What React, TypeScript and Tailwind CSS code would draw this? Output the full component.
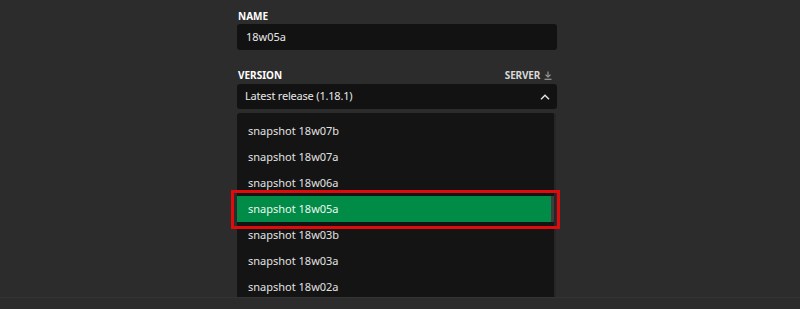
import React from 'react';

const versions = [
  'snapshot 18w07b',
  'snapshot 18w07a',
  'snapshot 18w06a',
  'snapshot 18w05a',
  'snapshot 18w03b',
  'snapshot 18w03a',
  'snapshot 18w02a',
];

const selected = 'snapshot 18w05a';

const ChevronUp = () => (
  <svg width="10" height="6" viewBox="0 0 10 6" fill="none" stroke="#e5e5e5" strokeWidth="1.4">
    <path d="M1 5.2 L5 1.2 L9 5.2" />
  </svg>
);

const DownloadIcon = () => (
  <svg width="8" height="9" viewBox="0 0 8 9" fill="none" stroke="#9a9a9a" strokeWidth="1.2">
    <path d="M4 0.5 V5.8" />
    <path d="M1.5 3.6 L4 6 L6.5 3.6" />
    <path d="M0.5 8.3 H7.5" />
  </svg>
);

const App: React.FC = () => {
  return (
    <div
      className="h-[309px] w-[800px] overflow-hidden bg-[#2c2c2c] text-white"
      style={{ fontFamily: '"Noto Sans", "Open Sans", sans-serif' }}
    >
      <div className="ml-[237px] w-[320px] pt-[10px]">
        {/* Name */}
        <div className="text-[10px] font-bold leading-[12px] text-white pl-[1px] mb-[2px]">NAME</div>
        <div className="h-[26px] rounded-[3px] bg-[#121212] px-[9px] flex items-center text-[11px] text-[#e8e8e8]">
          18w05a
        </div>

        {/* Version */}
        <div className="mt-[19px] mb-[3px] flex items-center justify-between text-[10px] font-bold leading-[12px] pl-[1px] pr-[5px]">
          <span>VERSION</span>
          <span className="flex items-center gap-[4px] text-[#d8d8d8] tracking-[-0.2px]">
            SERVER
            <DownloadIcon />
          </span>
        </div>
        <div className="h-[25px] rounded-[3px] bg-[#121212] pl-[8px] pr-[7px] flex items-center justify-between text-[11px] tracking-[-0.2px] text-[#e8e8e8]">
          <span>Latest release (1.18.1)</span>
          <ChevronUp />
        </div>

        {/* Dropdown */}
        <div className="relative mt-[4px] h-[184px] w-[319px] rounded-t-[3px] bg-[#141414] pt-[5px] border-r-2 border-[#262626]">
          {versions.map((v) => {
            const isSel = v === selected;
            return (
              <div key={v} className="relative flex h-[26px] items-center">
                <div
                  className={`flex h-full w-[315px] items-center pl-[11px] text-[11px] ${
                    isSel ? 'bg-[#008b46] text-[#eef7f1]' : 'text-[#e2e2e2]'
                  }`}
                >
                  {v}
                </div>
                {isSel && (
                  <>
                    <div className="h-full w-[3px] bg-[#3d3d3d]" />
                    <div className="pointer-events-none absolute left-[-6px] top-[-6px] h-[39px] w-[329px] border-[3px] border-[#e00b0b]" />
                  </>
                )}
              </div>
            );
          })}
        </div>
      </div>
      <div className="h-px w-full bg-[#333333]" />
    </div>
  );
};

export default App;
